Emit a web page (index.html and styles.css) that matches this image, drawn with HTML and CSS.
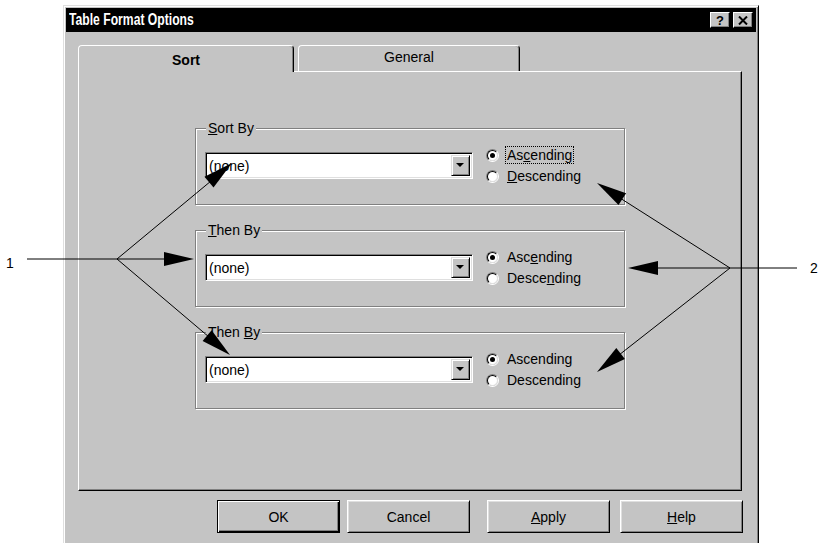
FILE: index.html
```html
<!DOCTYPE html>
<html lang="en">
<head>
  <meta charset="UTF-8" />
  <title>Table Format Options</title>
  <link rel="stylesheet" href="styles.css">
</head>
<body>

<div class="dialog">
  <div class="titlebar">
    <span class="title">Table Format Options</span>
    <div class="cap-btns">
      <span class="cap-btn">?</span>
      <span class="cap-btn">
        <svg width="10" height="9" viewBox="0 0 10 9"><path d="M1 0.5 L9 8.5 M9 0.5 L1 8.5" stroke="#000" stroke-width="2"/></svg>
      </span>
    </div>
  </div>

  <div class="tabs">
    <div class="tab active">Sort</div>
    <div class="tab general">General</div>
  </div>

  <div class="sheet">
    <div class="group">
      <span class="group-label"><u>S</u>ort By</span>
      <div class="group-row">
        <div class="combo">
          <span class="combo-value">(none)</span>
          <span class="combo-arrow"></span>
        </div>
        <div class="radios">
          <div class="radio-opt"><span class="radio checked"></span><span class="radio-text focus">As<u>c</u>ending</span></div>
          <div class="radio-opt"><span class="radio"></span><span class="radio-text"><u>D</u>escending</span></div>
        </div>
      </div>
    </div>

    <div class="group">
      <span class="group-label"><u>T</u>hen By</span>
      <div class="group-row">
        <div class="combo">
          <span class="combo-value">(none)</span>
          <span class="combo-arrow"></span>
        </div>
        <div class="radios">
          <div class="radio-opt"><span class="radio checked"></span><span class="radio-text">Asc<u>e</u>nding</span></div>
          <div class="radio-opt"><span class="radio"></span><span class="radio-text">Desce<u>n</u>ding</span></div>
        </div>
      </div>
    </div>

    <div class="group">
      <span class="group-label">Then <u>B</u>y</span>
      <div class="group-row">
        <div class="combo">
          <span class="combo-value">(none)</span>
          <span class="combo-arrow"></span>
        </div>
        <div class="radios">
          <div class="radio-opt"><span class="radio checked"></span><span class="radio-text">Ascending</span></div>
          <div class="radio-opt"><span class="radio"></span><span class="radio-text">Descendin<u>g</u></span></div>
        </div>
      </div>
    </div>
  </div>

  <div class="buttons">
    <div class="btn default">OK</div>
    <div class="btn">Cancel</div>
    <div class="btn apply"><u>A</u>pply</div>
    <div class="btn help"><u>H</u>elp</div>
  </div>
</div>

<!-- callout arrows drawn over the screenshot -->
<svg class="callouts" width="818" height="543" viewBox="0 0 818 543">
  <text x="6" y="268" class="callout-num">1</text>
  <line x1="27" y1="259" x2="166" y2="259" stroke-width="1.6"/>
  <polygon points="194,259 164,252 164,266"/>
  <line x1="117" y1="259" x2="211" y2="181"/>
  <polygon points="232,163 213.5,187.6 204.5,176.8"/>
  <line x1="117" y1="259" x2="209" y2="337"/>
  <polygon points="230,355 202.6,340.9 211.6,330.3"/>

  <text x="810" y="273" class="callout-num">2</text>
  <line x1="656" y1="268" x2="797" y2="268" stroke-width="1.6"/>
  <polygon points="628,268 658,261 658,275"/>
  <line x1="730" y1="268" x2="620" y2="198"/>
  <polygon points="597,183 626.1,193.3 618.5,205.1"/>
  <line x1="730" y1="268" x2="619" y2="355"/>
  <polygon points="597,372 624.9,359 616.3,348"/>
</svg>

</body>
</html>
```

FILE: styles.css
```css
body {
  margin: 0;
  height: 543px;
  overflow: hidden;
  position: relative;
  background: #fff;
  color: #000;
  font-family: "Liberation Sans", Arial, sans-serif;
  font-size: 14px;
}
.dialog {
  box-sizing: border-box;
  width: 696px;
  height: 550px;
  margin: 5px 0 0 63px;
  padding: 2px;
  background: #c4c4c4;
  border: 1px solid;
  border-color: #dfdfdf #000 #000 #dfdfdf;
  box-shadow: inset 1px 1px #fff, inset -1px -1px #808080;
}
.titlebar {
  height: 24px;
  background: #000;
  color: #fff;
  display: flex;
  align-items: center;
  justify-content: space-between;
  padding: 0 3px 0 3px;
}
.title {
  display: inline-block;
  font-weight: bold;
  font-size: 16px;
  transform: scaleX(0.76);
  transform-origin: left center;
}
.cap-btns {
  display: flex;
  gap: 3px;
}
.cap-btn {
  box-sizing: border-box;
  width: 20px;
  height: 16px;
  background: #c4c4c4;
  color: #000;
  border: 1px solid;
  border-color: #fff #000 #000 #fff;
  box-shadow: inset -1px -1px #808080;
  display: flex;
  align-items: center;
  justify-content: center;
  font-weight: bold;
  font-size: 13px;
}
.tabs {
  position: relative;
  z-index: 1;
  display: flex;
  align-items: flex-start;
  gap: 4px;
  height: 26px;
  margin: 13px 0 0 12px;
}
.tab {
  box-sizing: border-box;
  height: 26px;
  background: #c4c4c4;
  border: 1px solid;
  border-bottom: 0;
  border-color: #fff #000 transparent #fff;
  border-radius: 4px 4px 0 0;
  box-shadow: inset -1px 0 #808080;
  display: flex;
  align-items: center;
  justify-content: center;
}
.tab.active {
  width: 216px;
  height: 27px;
  padding-top: 2px;
  font-weight: bold;
}
.tab.general {
  width: 222px;
  padding-bottom: 3px;
}
.sheet {
  box-sizing: border-box;
  width: 664px;
  height: 420px;
  margin-left: 12px;
  padding: 56px 0 0 116px;
  border: 1px solid;
  border-color: #fff #000 #000 #fff;
  box-shadow: inset -1px -1px #808080;
}
.group {
  position: relative;
  box-sizing: border-box;
  width: 430px;
  height: 77px;
  margin-bottom: 25px;
  padding: 23px 0 0 9px;
  border: 1px solid #808080;
  box-shadow: 1px 1px #fff, inset 1px 1px #fff;
}
.group-label {
  position: absolute;
  top: -9px;
  left: 10px;
  padding: 0 2px;
  line-height: 16px;
  background: #c4c4c4;
}
.group-row {
  display: flex;
  align-items: center;
  height: 27px;
}
.combo {
  box-sizing: border-box;
  width: 268px;
  height: 27px;
  padding: 2px;
  background: #fff;
  border: 1px solid;
  border-color: #808080 #fff #fff #808080;
  box-shadow: inset 1px 1px #000, inset -1px -1px #dfdfdf;
  display: flex;
  align-items: center;
  justify-content: space-between;
}
.combo-value {
  padding-left: 1px;
}
.combo-arrow {
  position: relative;
  box-sizing: border-box;
  width: 19px;
  height: 21px;
  background: #c4c4c4;
  border: 1px solid;
  border-color: #dfdfdf #000 #000 #dfdfdf;
  box-shadow: inset 1px 1px #fff, inset -1px -1px #808080;
}
.combo-arrow::after {
  content: "";
  position: absolute;
  left: 4px;
  top: 7px;
  border-left: 4px solid transparent;
  border-right: 4px solid transparent;
  border-top: 4px solid #000;
}
.radios {
  display: flex;
  flex-direction: column;
  margin-left: 13px;
}
.radio-opt {
  display: flex;
  align-items: center;
  height: 21px;
}
.radio {
  position: relative;
  box-sizing: border-box;
  width: 13px;
  height: 13px;
  border-radius: 50%;
  border: 1px solid;
  border-color: #808080 #fff #fff #808080;
}
.radio::before {
  content: "";
  position: absolute;
  inset: 0;
  box-sizing: border-box;
  border-radius: 50%;
  border: 1px solid;
  border-color: #000 #dfdfdf #dfdfdf #000;
  background: #fff;
}
.radio.checked::after {
  content: "";
  position: absolute;
  left: 3px;
  top: 3px;
  width: 5px;
  height: 5px;
  border-radius: 50%;
  background: #000;
}
.radio-text {
  margin-left: 8px;
  line-height: 16px;
}
.radio-text.focus {
  margin-left: 6px;
  padding: 0 1px;
  border: 1px dotted #000;
}
.buttons {
  display: flex;
  gap: 7px;
  margin: 9px 0 0 151px;
}
.btn {
  box-sizing: border-box;
  width: 123px;
  height: 33px;
  border: 1px solid;
  border-color: #fff #000 #000 #fff;
  box-shadow: inset 1px 1px #dfdfdf, inset -1px -1px #808080;
  display: flex;
  align-items: center;
  justify-content: center;
}
.btn.default {
  border-color: #000;
  box-shadow: inset 1px 1px #fff, inset -1px -1px #000, inset -2px -2px #808080;
}
.btn.apply { margin-left: 10px; }
.btn.help { margin-left: 3px; }
.callouts {
  position: absolute;
  top: 0;
  left: 0;
  pointer-events: none;
}
.callouts line {
  stroke: #000;
  stroke-width: 1;
}
.callouts polygon {
  fill: #000;
}
.callout-num {
  font-family: "Liberation Sans", Arial, sans-serif;
  font-size: 14px;
  fill: #000;
}
```
